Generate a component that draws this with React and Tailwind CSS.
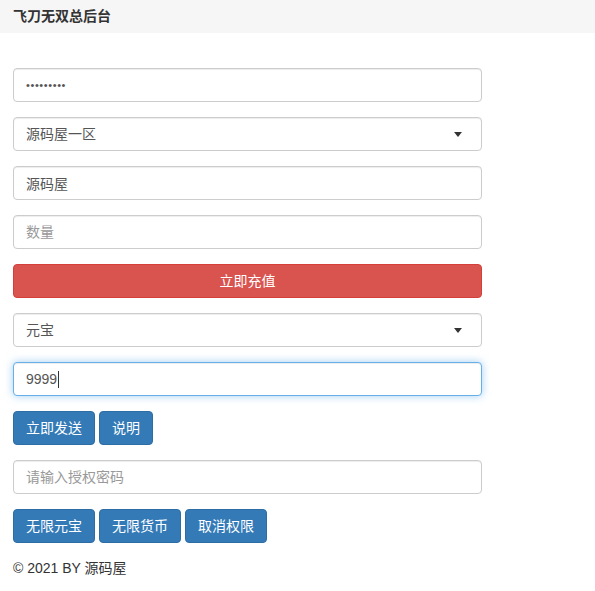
import React from "react";

const font = { fontFamily: '"Liberation Sans", "Noto Sans CJK SC", sans-serif' };

const box =
  "h-[34px] w-full rounded-[4px] border border-[#ccc] bg-white px-[12px] text-[#555] shadow-[inset_0_1px_1px_rgba(0,0,0,0.075)] outline-none placeholder:text-[#999]";
const field = `${box} text-[14px]`;

function Select({ value }) {
  return (
    <div className={`${field} flex items-center justify-between`}>
      <span>{value}</span>
      <svg width="8" height="5" viewBox="0 0 8 5" className="mr-[7px]">
        <path d="M0 0h8L4 5z" fill="#333" />
      </svg>
    </div>
  );
}

function BlueBtn({ children }) {
  return (
    <button className="h-[34px] rounded-[4px] border border-[#2e6da4] bg-[#337ab7] px-[12px] text-[14px] text-white">
      {children}
    </button>
  );
}

export default function App() {
  return (
    <div className="min-h-[591px] bg-white text-[#333]" style={font}>
      <header className="flex h-[33px] items-center bg-[#f6f6f6] px-[13px]">
        <h1 className="text-[14px] font-bold text-[#333]">飞刀无双总后台</h1>
      </header>
      <main className="flex w-[482px] flex-col gap-[15px] pl-[13px] pt-[35px]">
        <input
          className={`${box} text-[11px] tracking-[0.6px]`}
          type="password"
          defaultValue="123456789"
          readOnly
        />
        <Select value="源码屋一区" />
        <input className={field} type="text" defaultValue="源码屋" readOnly />
        <input className={field} type="text" placeholder="数量" />
        <button className="h-[34px] w-full rounded-[4px] border border-[#d43f3a] bg-[#d9534f] text-[14px] text-white">
          立即充值
        </button>
        <Select value="元宝" />
        <div className="flex h-[34px] w-full items-center rounded-[4px] border border-[#66afe9] bg-white px-[12px] text-[14px] text-[#555] shadow-[inset_0_1px_1px_rgba(0,0,0,0.075),0_0_8px_rgba(102,175,233,0.6)]">
          <span>9999</span>
          <span className="ml-px h-[17px] w-px bg-[#333]" />
        </div>
        <div className="flex gap-[4px]">
          <BlueBtn>立即发送</BlueBtn>
          <BlueBtn>说明</BlueBtn>
        </div>
        <input className={field} type="text" placeholder="请输入授权密码" />
        <div className="flex gap-[4px]">
          <BlueBtn>无限元宝</BlueBtn>
          <BlueBtn>无限货币</BlueBtn>
          <BlueBtn>取消权限</BlueBtn>
        </div>
        <footer className="text-[14px] leading-[20px] text-[#333]">© 2021 BY 源码屋</footer>
      </main>
    </div>
  );
}
